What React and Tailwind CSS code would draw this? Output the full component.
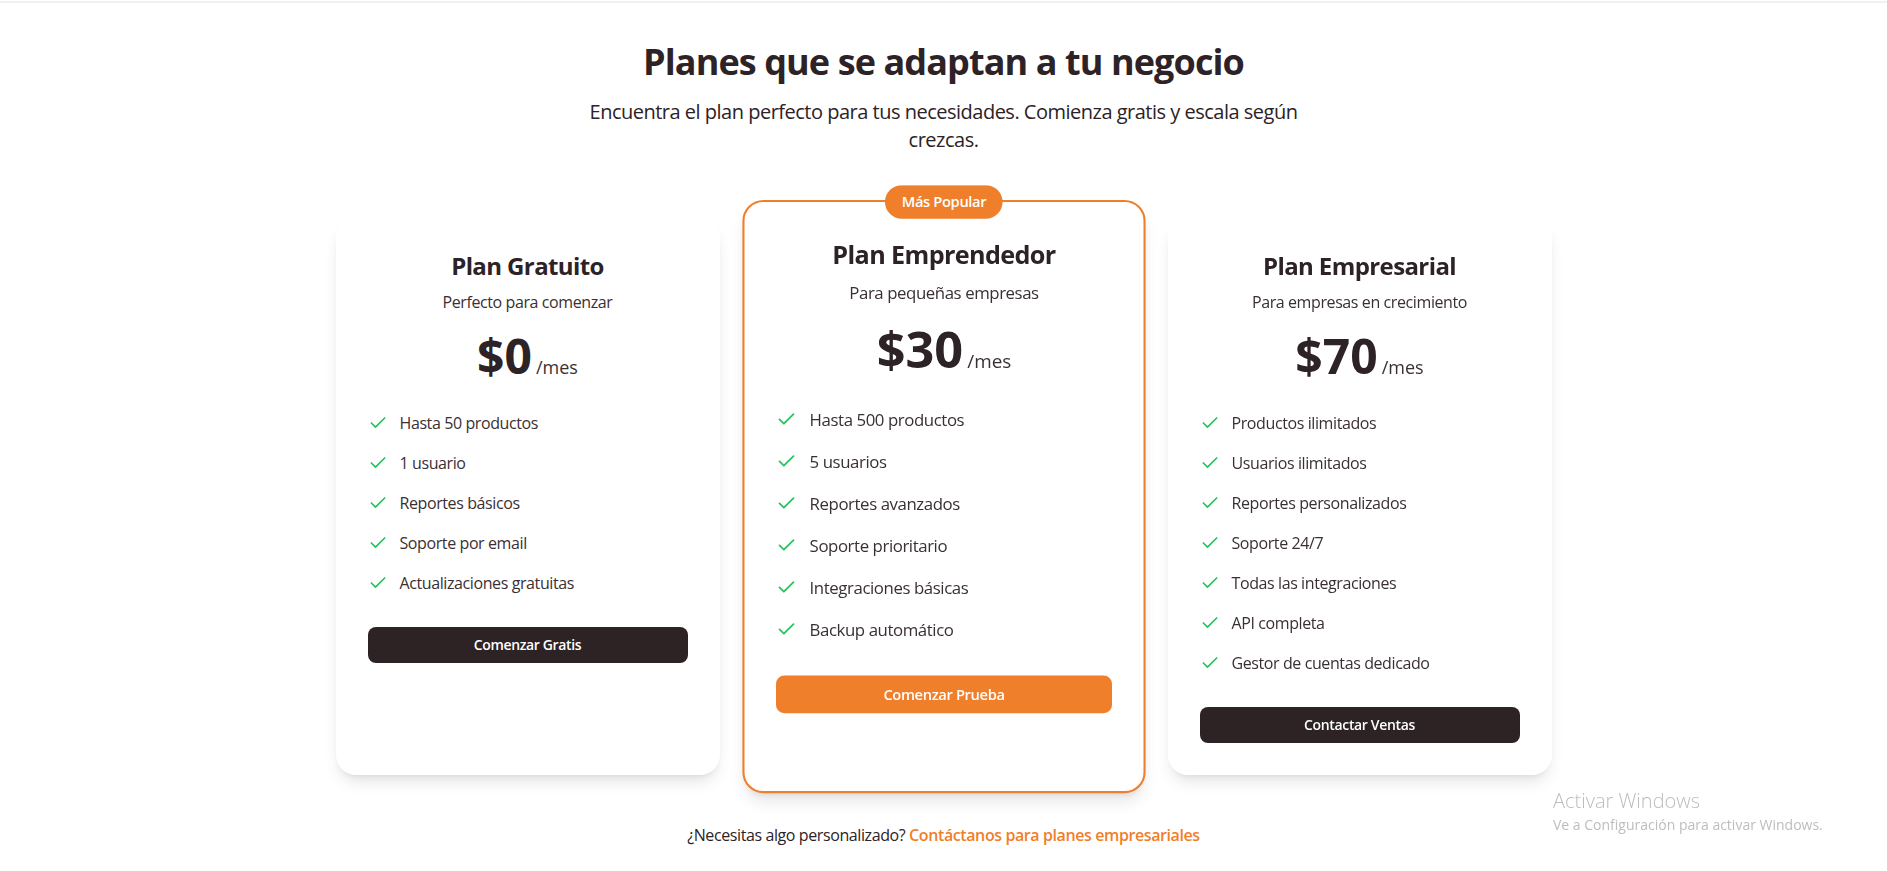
import React from 'react';
import { Check } from 'lucide-react';

const plans = [
  {
    name: 'Plan Gratuito',
    description: 'Perfecto para comenzar',
    price: '$0',
    features: [
      'Hasta 50 productos',
      '1 usuario',
      'Reportes básicos',
      'Soporte por email',
      'Actualizaciones gratuitas',
    ],
    cta: 'Comenzar Gratis',
  },
  {
    name: 'Plan Emprendedor',
    description: 'Para pequeñas empresas',
    price: '$30',
    features: [
      'Hasta 500 productos',
      '5 usuarios',
      'Reportes avanzados',
      'Soporte prioritario',
      'Integraciones básicas',
      'Backup automático',
    ],
    cta: 'Comenzar Prueba',
    popular: true,
  },
  {
    name: 'Plan Empresarial',
    description: 'Para empresas en crecimiento',
    price: '$70',
    features: [
      'Productos ilimitados',
      'Usuarios ilimitados',
      'Reportes personalizados',
      'Soporte 24/7',
      'Todas las integraciones',
      'API completa',
      'Gestor de cuentas dedicado',
    ],
    cta: 'Contactar Ventas',
  },
];

const PlanCard = ({ plan }) => {
  const cardClass = plan.popular
    ? 'relative bg-white rounded-[20px] shadow-lg border-2 border-[#ef7f2a] scale-105 -my-1 pt-[34px] px-[30px] pb-[30px] flex flex-col'
    : 'relative bg-white rounded-[20px] shadow-lg p-8 flex flex-col';

  return (
    <div className={cardClass}>
      {plan.popular && (
        <div className="absolute top-0 left-1/2 -translate-x-1/2 -translate-y-1/2 bg-[#ef7f2a] text-white text-sm font-semibold px-4 py-[6px] leading-5 rounded-full whitespace-nowrap tracking-tight">
          Más Popular
        </div>
      )}

      <div className="text-center">
        <h3 className="text-2xl leading-8 font-bold text-[#2d2226] tracking-tight">{plan.name}</h3>
        <p className="mt-2 text-base leading-6 text-[#3a3034] tracking-tight">{plan.description}</p>
        <div className="mt-[18px] flex items-baseline justify-center gap-1">
          <span className="text-5xl leading-[48px] font-bold text-[#2d2226]">{plan.price}</span>
          <span className="text-lg text-[#3a3034]">/mes</span>
        </div>
      </div>

      <ul className="mt-[30px] space-y-4">
        {plan.features.map((feature) => (
          <li key={feature} className="flex items-center gap-3 text-base leading-6 text-[#3a3034] tracking-tight">
            <Check className="w-5 h-5 text-[#22c55e] shrink-0" strokeWidth={2} />
            <span>{feature}</span>
          </li>
        ))}
      </ul>

      <button
        className={
          plan.popular
            ? 'mt-8 w-full py-2 rounded-lg bg-[#ef7f2a] text-white text-sm leading-5 font-semibold tracking-tight'
            : 'mt-8 w-full py-2 rounded-lg bg-[#2d2224] text-white text-sm leading-5 font-semibold tracking-tight'
        }
      >
        {plan.cta}
      </button>
    </div>
  );
};

export default function App() {
  return (
    <div className="relative min-h-screen bg-white font-['Open_Sans',sans-serif] text-[#2d2226]">
      <div className="h-[2px] mt-px bg-[#f1f1f1]" />

      <section className="max-w-7xl mx-auto px-8 pt-[39px] pb-10">
        <div className="text-center">
          <h2 className="text-4xl leading-10 font-bold text-[#2d2226] tracking-tight">
            Planes que se adaptan a tu negocio
          </h2>
          <p className="mt-4 max-w-3xl mx-auto text-xl leading-7 text-[#2d2226] tracking-tight">
            Encuentra el plan perfecto para tus necesidades. Comienza gratis y escala según crezcas.
          </p>
        </div>

        <div className="mt-16 grid grid-cols-3 gap-8">
          {plans.map((plan) => (
            <PlanCard key={plan.name} plan={plan} />
          ))}
        </div>

        <p className="mt-12 text-center text-base leading-6 text-[#2d2226] tracking-tight">
          ¿Necesitas algo personalizado?{' '}
          <a href="#" className="text-[#ef7f2a] font-semibold">
            Contáctanos para planes empresariales
          </a>
        </p>
      </section>

      <div className="absolute left-[1553px] top-[786px] text-[#bdbdbd] font-['Open_Sans',sans-serif] pointer-events-none">
        <div className="text-xl leading-7 font-light">Activar Windows</div>
        <div className="text-sm leading-5">Ve a Configuración para activar Windows.</div>
      </div>
    </div>
  );
}
